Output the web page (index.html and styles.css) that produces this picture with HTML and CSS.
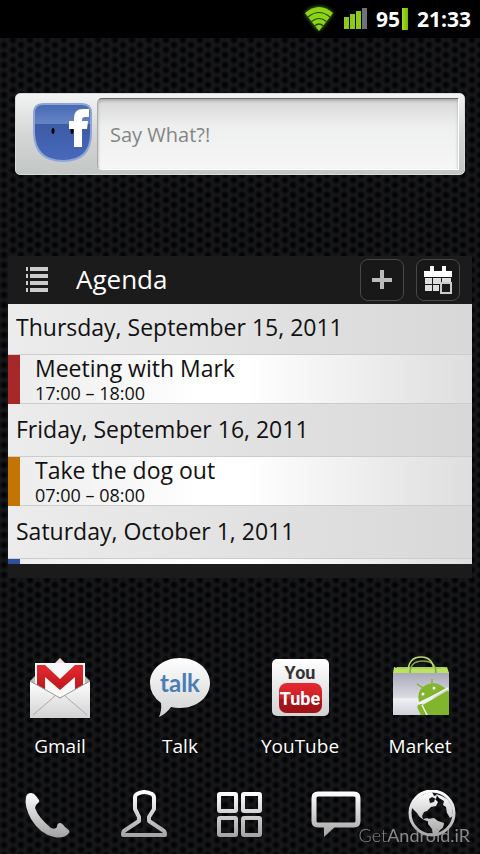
FILE: index.html
```html
<!DOCTYPE html>
<html lang="en">
<head>
<meta charset="utf-8">
<meta name="viewport" content="width=device-width, initial-scale=1">
<title>Home screen</title>
<link rel="stylesheet" href="styles.css">
</head>
<body>
<header class="status">
  <svg class="status-wifi" width="34" height="28" viewBox="0 0 34 28" aria-hidden="true">
    <path d="M17 26 3 8Q17 -4 31 8Z" fill="#8fd314"/>
    <g fill="none" stroke="#1d4a04" stroke-width="1.2"><path d="M6 12q11-9 22 0M9.500 16.500q7.500-6 15 0M12.500 21q4.500-4 9 0"/></g>
  </svg>
  <svg class="status-signal" width="24" height="22" viewBox="0 0 24 22" aria-hidden="true">
    <g fill="#8ccc18"><rect y="9" width="5" height="12"/><rect x="6" y="6" width="5" height="15"/><rect x="12" y="3" width="5" height="18"/></g>
    <rect x="18" width="5" height="21" fill="#707078"/>
  </svg>
  <span class="battery">95<i class="battery-bar"></i></span>
  <time>21:33</time>
</header>

<main class="home">
  <form class="post">
    <svg width="60" height="60" viewBox="0 0 60 60" aria-hidden="true">
      <defs><linearGradient id="fb" x2="0" y2="1"><stop offset="0" stop-color="#4669b4"/><stop offset=".34" stop-color="#6584c5"/><stop offset=".36" stop-color="#3c5ca6"/><stop offset="1" stop-color="#4868bd"/></linearGradient></defs>
      <path d="M10 2h39q9 0 9 9v20q0 28-28 28T1 31V11Q1 2 10 2Z" fill="url(#fb)" stroke="#8fa6d5" stroke-width="2"/>
      <ellipse cx="20" cy="29" rx="1.500" ry="3"/><ellipse cx="39" cy="29" rx="1.500" ry="3"/>
      <path d="M41 45V27h-5v-8h5v-3q0-9 9-9h6v8h-4q-3 0-3 3v1h6l-1 8h-5v18Z" fill="#fff"/>
    </svg>
    <input class="post-input" type="text" placeholder="Say What?!" aria-label="Say What?!">
  </form>

  <section class="agenda">
    <div class="agenda-head">
      <svg width="24" height="28" viewBox="0 0 24 28" aria-hidden="true"><path d="M5 3h18M5 10h18M5 17h18M5 24h18M1 3h2M1 10h2M1 17h2M1 24h2" stroke="#ccc" stroke-width="4"/></svg>
      <h1>Agenda</h1>
      <button class="tool" type="button" aria-label="Add event"><svg width="20" height="20" viewBox="0 0 20 20"><path d="M10 0v19M0 10h20" stroke="#bbb" stroke-width="4"/></svg></button>
      <button class="tool" type="button" aria-label="Calendar"><svg width="30" height="30" viewBox="0 0 30 30">
        <path d="M1 6h6V1h4v5h8V1h4v5h6v6H1Z" fill="#fff"/>
        <path d="M2 13h7v6H2ZM10 13h8v6h-8ZM19 13h9v4h-9ZM2 20h7v6H2ZM10 20h6v6h-6Z" fill="#ddd"/>
        <rect x="18" y="18" width="10" height="10" fill="#1b1b1b" stroke="#ccc" stroke-width="2"/>
      </svg></button>
    </div>
    <ol class="agenda-list">
      <li class="day">Thursday, September 15, 2011</li>
      <li class="event event-red"><span class="event-title">Meeting with Mark</span><span class="event-time">17:00 – 18:00</span></li>
      <li class="day">Friday, September 16, 2011</li>
      <li class="event event-orange"><span class="event-title">Take the dog out</span><span class="event-time">07:00 – 08:00</span></li>
      <li class="day">Saturday, October 1, 2011</li>
      <li class="event event-blue"></li>
    </ol>
  </section>

  <nav class="apps" aria-label="Apps">
    <a href="#gmail"><svg width="64" height="64" viewBox="0 0 64 64" aria-hidden="true">
      <defs><linearGradient id="paper" x2="0" y2="1"><stop offset="0" stop-color="#fff"/><stop offset="1" stop-color="#d2d2d2"/></linearGradient>
      <linearGradient id="red" x2="0" y2="1"><stop offset="0" stop-color="#e52a30"/><stop offset="1" stop-color="#b3151a"/></linearGradient></defs>
      <path d="M2 25 7 20h50l5 5-30 17Z" fill="#b9b9b9"/><path d="m26 8 6-6 6 6Z" fill="#f3dede"/>
      <path d="M7 7h50v34H7Z" fill="#f8f8f8"/>
      <path d="M9 38V9h8l15 14L47 9h8v29h-8V21L32 34 17 21v17Z" fill="url(#red)"/>
      <path d="m2 25 30 17 30-17v37H2Z" fill="url(#paper)"/>
      <path d="m5 59 22-19M59 59 37 40" stroke="#aaa" fill="none"/><path d="m2 25 30 17 30-17" stroke="#999" fill="none"/>
    </svg><span>Gmail</span></a>
    <a href="#talk"><svg width="64" height="64" viewBox="0 0 64 64" aria-hidden="true">
      <path d="M32 2c17 0 30 11 30 25S49 52 32 52q-5 0-9-1-4 6-12 10 3-7 2-14Q2 39 2 27C2 13 15 2 32 2Z" fill="url(#paper)"/>
      <text class="talk-word" x="32" y="36" text-anchor="middle">talk</text>
    </svg><span>Talk</span></a>
    <a href="#youtube"><svg width="64" height="64" viewBox="0 0 64 64" aria-hidden="true">
      <rect x="4" y="3" width="57" height="57" rx="5" fill="url(#paper)"/>
      <rect x="11" y="27" width="43" height="30" rx="8" fill="url(#red)"/><path d="M11 43h43v6q0 8-8 8H19q-8 0-8-8Z" fill="#8c0c12" opacity=".5"/>
      <text class="tube-word" x="32" y="23" text-anchor="middle" fill="#333">You</text>
      <text class="tube-word" x="32" y="49" text-anchor="middle" fill="#fff">Tube</text>
    </svg><span>YouTube</span></a>
    <a href="#market"><svg width="64" height="64" viewBox="0 0 64 64" aria-hidden="true">
      <defs><linearGradient id="bag" x2="0" y2="1"><stop offset="0" stop-color="#aaa9bb"/><stop offset=".6" stop-color="#dcdce4"/><stop offset=".61" stop-color="#f1f1f5"/><stop offset="1" stop-color="#d0d0d8"/></linearGradient><clipPath id="bagclip"><path d="M5 17h56v42H5Z"/></clipPath></defs>
      <path d="m5 17 4-6h48l4 6Z" fill="#a9cf55"/><path d="m5 17 1-6 6 2h40l7-2 2 6Z" fill="#bce264"/>
      <path d="M22 17q0-12 13-12t13 12" fill="none" stroke="#84a43b" stroke-width="1.500"/>
      <path d="M5 17h56v42H5Z" fill="url(#bag)"/>
      <path d="M20 17Q20 1 33 1t13 16" fill="none" stroke="#b8db70" stroke-width="1.500"/>
      <g clip-path="url(#bagclip)">
        <path d="M31 46Q28 34 38 29t20 4ZM33 50l26-15 6 1v25H39Z" fill="#80b52c"/>
        <rect x="29" y="48" width="6" height="18" rx="3" transform="rotate(-24 32 50)" fill="#80b52c"/>
        <path d="m35 32-6-4M44 28v-5" stroke="#80b52c" stroke-width="1.500"/><circle cx="35" cy="38" r="1.500" fill="#fff"/><circle cx="46" cy="32" r="1.500" fill="#fff"/>
        <path d="m31 48 29-16M34 49l5 10" stroke="#f2f5e8" stroke-width="1.500"/>
      </g>
    </svg><span>Market</span></a>
  </nav>

  <nav class="dock" aria-label="Dock">
    <a href="#phone" aria-label="Phone"><svg width="50" height="50" viewBox="0 0 50 50">
      <defs><linearGradient id="silver" gradientUnits="userSpaceOnUse" x1="0" y1="2" x2="0" y2="48"><stop offset="0" stop-color="#fff"/><stop offset="1" stop-color="#a0a0a0"/></linearGradient></defs>
      <path d="M8 3q3 0 5 3l3 4q1 2-1 3-3 2-3 5 3 9 16 20 4 2 6-1 0-4 3-4 2 0 5 4 6 4 4 6-5 6-15 4Q17 44 8 29 1 16 3 7 4 3 8 3Z" fill="url(#silver)"/></svg></a>
    <a href="#contacts" aria-label="Contacts"><svg width="50" height="50" viewBox="0 0 50 50"><path d="M18 4q7-4 15 0 2 1 2 4v11l-5 8v4l15 10q1 1 1 4H4q0-3 1-4l15-10v-4l-4-8V8q0-3 2-4Z" fill="none" stroke="url(#silver)" stroke-width="4" stroke-linejoin="round"/></svg></a>
    <a href="#apps" aria-label="All apps"><svg width="50" height="50" viewBox="0 0 50 50"><g fill="none" stroke="url(#silver)" stroke-width="4"><rect x="4" y="4" width="17" height="17" rx="1"/><rect x="28" y="4" width="17" height="17" rx="1"/><rect x="4" y="28" width="17" height="17" rx="1"/><rect x="28" y="28" width="17" height="17" rx="1"/></g></svg></a>
    <a href="#messages" aria-label="Messages"><svg width="50" height="50" viewBox="0 0 50 50"><path d="M7 4h36q4 0 4 4v23q0 4-4 4H7q-4 0-4-4V8q0-4 4-4Z" fill="none" stroke="url(#silver)" stroke-width="5"/><path d="M13 35v12l13-12Z" fill="url(#silver)"/></svg></a>
    <a href="#browser" aria-label="Browser"><svg width="50" height="50" viewBox="0 0 50 50">
      <circle cx="25" cy="23" r="22" fill="none" stroke="url(#silver)" stroke-width="3"/>
      <path d="M5 15Q12 3 25 2l2 4 3-1-1 4-4-2-3 2 1 4 4-1 1-3 3 3-2 4-5 1-4 4-3 1-2 4 1 3 5-1 2 4-3-1q-7-2-10-8l-6-6Z" fill="url(#silver)"/>
      <path d="m21 29 6-1 4 3 6 2q0 5-4 7l-3 5-4 1-1-7-4-5ZM29 4q13 3 16 13l1 9-3 2-3-5-1-6-3-2 1-4-5-3Z" fill="url(#silver)"/></svg></a>
  </nav>
</main>
<p class="watermark"><span>Get</span>Android.iR</p>
</body>
</html>
```
FILE: styles.css
```css
* { box-sizing: border-box; }

body {
  position: relative;
  display: flex;
  flex-direction: column;
  min-height: 100vh;
  margin: 0;
  color: #fff;
  font-family: "Open Sans", "Noto Sans", sans-serif;
  background-color: #17181a;
  background-image:
    radial-gradient(circle at 4px 5px, #030304 1px, transparent 5px),
    radial-gradient(circle at 13px 0, #030304 1px, transparent 5px),
    radial-gradient(circle at 13px 10px, #030304 1px, transparent 5px);
  background-size: 17px 10px;
}

a { color: inherit; text-decoration: none; }

.status {
  display: flex;
  align-items: center;
  justify-content: flex-end;
  height: 38px;
  padding-right: 9px;
  background: #000;
  font-size: 21px;
  font-weight: 700;
}
.status-wifi { margin-right: 8px; filter: drop-shadow(0 0 2px #5c9a00); }
.status-signal { margin-right: 8px; }
.battery { display: flex; align-items: center; gap: 2px; margin-right: 9px; }
.battery-bar { width: 6px; height: 22px; background: linear-gradient(90deg, #a6dd2a, #77b800); }

.home { display: flex; flex: 1; flex-direction: column; padding: 55px 0 14px; }

.post {
  display: flex;
  align-items: center;
  gap: 4px;
  height: 82px;
  margin: 0 15px;
  padding: 5px 5px 5px 17px;
  border-radius: 5px;
  background: linear-gradient(#f2f3f3, #d5d7d6 50%, #c2c6c4);
  border: 1px solid #d9dbda;
}
.post svg { flex: none; margin-top: -4px; }
.post-input {
  flex: 1;
  min-width: 0;
  height: 72px;
  padding: 0 12px;
  border: 1px solid #fff;
  border-top-color: #666;
  border-left-color: #aaa;
  border-radius: 5px 0 0 5px;
  background: linear-gradient(#d9d7d8, #eeefef 40%, #f6f6f6);
  box-shadow: inset 0 2px 3px #aaa;
  font: 20px "Open Sans", sans-serif;
  outline: none;
}
.post-input::placeholder { color: #858585; opacity: 1; }

.agenda { margin: 81px 8px 0; padding-bottom: 14px; background: #1b1b1b; }
.agenda-head { display: flex; align-items: center; height: 48px; padding: 0 12px 0 17px; gap: 12px; }
.agenda-head h1 { flex: 1; margin: 0 0 0 15px; font-size: 26px; font-weight: 400; line-height: 36px; padding-bottom: 2px; }
.tool {
  display: grid;
  place-items: center;
  width: 44px;
  height: 42px;
  padding: 0;
  border: 1px solid #484848;
  border-radius: 8px;
  background: #181818;
}

.agenda-list {
  max-height: 260px;
  margin: 0;
  padding: 0;
  overflow: hidden;
  list-style: none;
  color: #111;
}
.day {
  height: 53px;
  padding: 0 8px;
  border-bottom: 1px solid #ccc;
  background: linear-gradient(90deg, #ececec, #d8d8d8);
  font-size: 23px;
  line-height: 51px;
}
.day:first-child { height: 51px; line-height: 47px; }
.event {
  display: flex;
  flex-direction: column;
  height: 49px;
  padding-left: 15px;
  border-left: 12px solid;
  background: linear-gradient(90deg, #ededed, #fff 40%, #fff 50%, #dedede);
  box-shadow: inset 0 -1px #ccc;
}
.event-red { border-left-color: #a62828; }
.event-orange { border-left-color: #c47400; }
.event-blue { border-left-color: #2f4f9f; }
.event-title { font-size: 23px; line-height: 27px; }
.event-time { font-size: 18px; line-height: 23px; }

.apps { display: grid; grid-template-columns: repeat(4, 1fr); margin-top: 78px; }
.apps a { display: flex; flex-direction: column; align-items: center; gap: 13px; }
.apps span { font-size: 19px; line-height: 26px; text-shadow: 0 1px 2px #000; }
.talk-word { font: 700 24px Lato, sans-serif; fill: #4a7db5; }
.tube-word { font: 700 18px Roboto, sans-serif; }

.dock { display: grid; grid-template-columns: repeat(5, 1fr); margin-top: 31px; }
.dock a { display: grid; place-items: center; }

.watermark {
  position: absolute;
  right: 10px;
  bottom: 7px;
  margin: 0;
  color: #a6a6a6;
  font: 400 18px/24px Lato, sans-serif;
  opacity: .8;
}
.watermark span { font-weight: 300; }
```
